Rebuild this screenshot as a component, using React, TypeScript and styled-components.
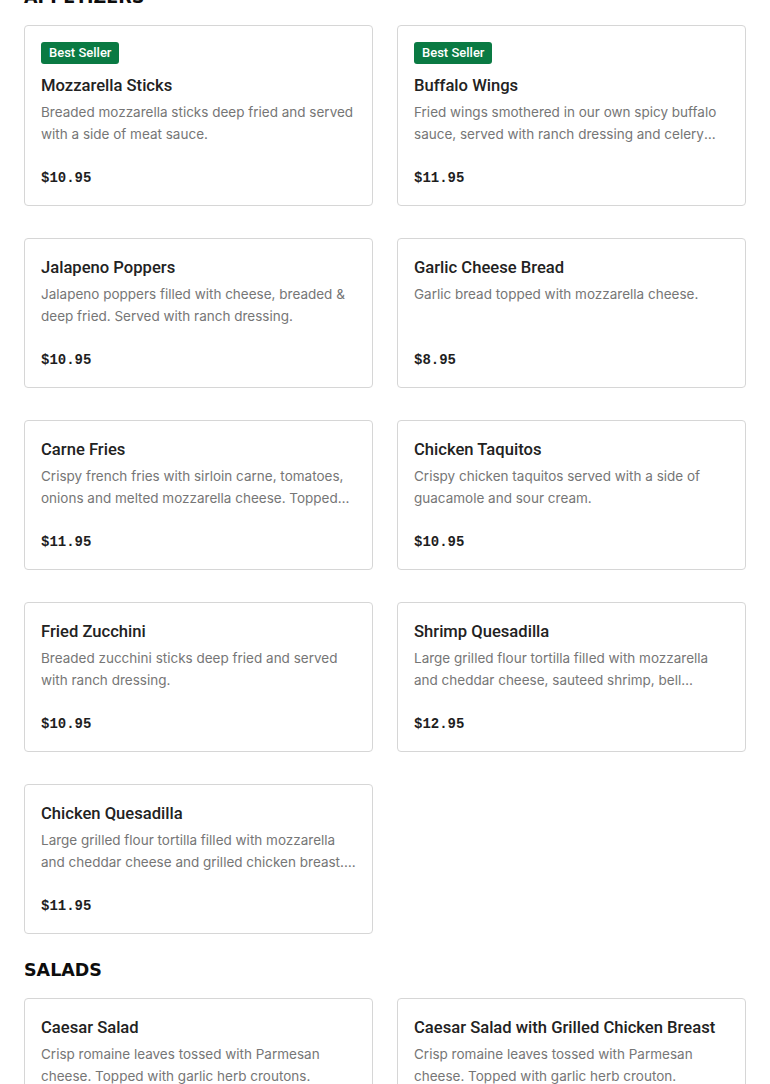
import styled, { createGlobalStyle } from 'styled-components';

const GlobalStyle = createGlobalStyle`
  body {
    margin: 0;
    background: #ffffff;
    font-family: Inter, 'Liberation Sans', Arial, sans-serif;
  }
`;

const Page = styled.div`
  margin-top: -15px;
  padding: 0 24px 24px;
`;

const Section = styled.section`
  margin-bottom: 24px;
`;

const SectionTitle = styled.h2`
  margin: 0 0 16px;
  font-family: 'DejaVu Sans', sans-serif;
  font-size: 17.5px;
  font-weight: 700;
  line-height: 24px;
  color: #0d0d0d;
  text-transform: uppercase;
`;

const Grid = styled.div`
  display: grid;
  grid-template-columns: 1fr 1fr;
  column-gap: 24px;
  row-gap: 32px;
`;

const Card = styled.div`
  display: flex;
  flex-direction: column;
  border: 1px solid #d6d6d6;
  border-radius: 4px;
  padding: 16px 16px 17px;
  background: #ffffff;
`;

const Badge = styled.span`
  align-self: flex-start;
  height: 22px;
  line-height: 22px;
  padding: 0 8px;
  margin-bottom: 9px;
  border-radius: 3px;
  background: #0a7a43;
  color: #ffffff;
  font-family: Roboto, sans-serif;
  font-size: 13px;
  font-weight: 500;
`;

const Name = styled.div`
  font-family: Roboto, 'Liberation Sans', sans-serif;
  font-size: 16.6px;
  line-height: 26px;
  font-weight: 500;
  color: #222222;
  margin-bottom: 2px;
`;

const Description = styled.div`
  font-size: 13.5px;
  line-height: 22px;
  color: #767676;
  min-height: 44px;
  display: -webkit-box;
  -webkit-line-clamp: 2;
  -webkit-box-orient: vertical;
  overflow: hidden;
`;

const Price = styled.div`
  margin-top: auto;
  padding-top: 23px;
  font-family: 'Liberation Mono', 'DejaVu Sans Mono', monospace;
  font-size: 14px;
  font-weight: 700;
  line-height: 20px;
  color: #1e1e1e;
`;

type Item = {
  name: string;
  description: string;
  price: string;
  bestSeller?: boolean;
};

const appetizers: Item[] = [
  {
    name: 'Mozzarella Sticks',
    description: 'Breaded mozzarella sticks deep fried and served with a side of meat sauce.',
    price: '$10.95',
    bestSeller: true,
  },
  {
    name: 'Buffalo Wings',
    description:
      'Fried wings smothered in our own spicy buffalo sauce, served with ranch dressing and celery sticks.',
    price: '$11.95',
    bestSeller: true,
  },
  {
    name: 'Jalapeno Poppers',
    description: 'Jalapeno poppers filled with cheese, breaded & deep fried. Served with ranch dressing.',
    price: '$10.95',
  },
  {
    name: 'Garlic Cheese Bread',
    description: 'Garlic bread topped with mozzarella cheese.',
    price: '$8.95',
  },
  {
    name: 'Carne Fries',
    description:
      'Crispy french fries with sirloin carne, tomatoes, onions and melted mozzarella cheese. Topped with sour cream.',
    price: '$11.95',
  },
  {
    name: 'Chicken Taquitos',
    description: 'Crispy chicken taquitos served with a side of guacamole and sour cream.',
    price: '$10.95',
  },
  {
    name: 'Fried Zucchini',
    description: 'Breaded zucchini sticks deep fried and served with ranch dressing.',
    price: '$10.95',
  },
  {
    name: 'Shrimp Quesadilla',
    description:
      'Large grilled flour tortilla filled with mozzarella and cheddar cheese, sauteed shrimp, bell peppers and onions.',
    price: '$12.95',
  },
  {
    name: 'Chicken Quesadilla',
    description:
      'Large grilled flour tortilla filled with mozzarella and cheddar cheese and grilled chicken breast. Served with sour cream.',
    price: '$11.95',
  },
];

const salads: Item[] = [
  {
    name: 'Caesar Salad',
    description: 'Crisp romaine leaves tossed with Parmesan cheese. Topped with garlic herb croutons.',
    price: '$9.95',
  },
  {
    name: 'Caesar Salad with Grilled Chicken Breast',
    description: 'Crisp romaine leaves tossed with Parmesan cheese. Topped with garlic herb crouton.',
    price: '$13.95',
  },
];

function MenuCard({ item }: { item: Item }) {
  return (
    <Card>
      {item.bestSeller ? <Badge>Best Seller</Badge> : null}
      <Name>{item.name}</Name>
      <Description>{item.description}</Description>
      <Price>{item.price}</Price>
    </Card>
  );
}

function MenuSection({ title, items }: { title: string; items: Item[] }) {
  return (
    <Section>
      <SectionTitle>{title}</SectionTitle>
      <Grid>
        {items.map((item) => (
          <MenuCard key={item.name} item={item} />
        ))}
      </Grid>
    </Section>
  );
}

function App() {
  return (
    <>
      <GlobalStyle />
      <Page>
        <MenuSection title="Appetizers" items={appetizers} />
        <MenuSection title="Salads" items={salads} />
      </Page>
    </>
  );
}

export default App;
